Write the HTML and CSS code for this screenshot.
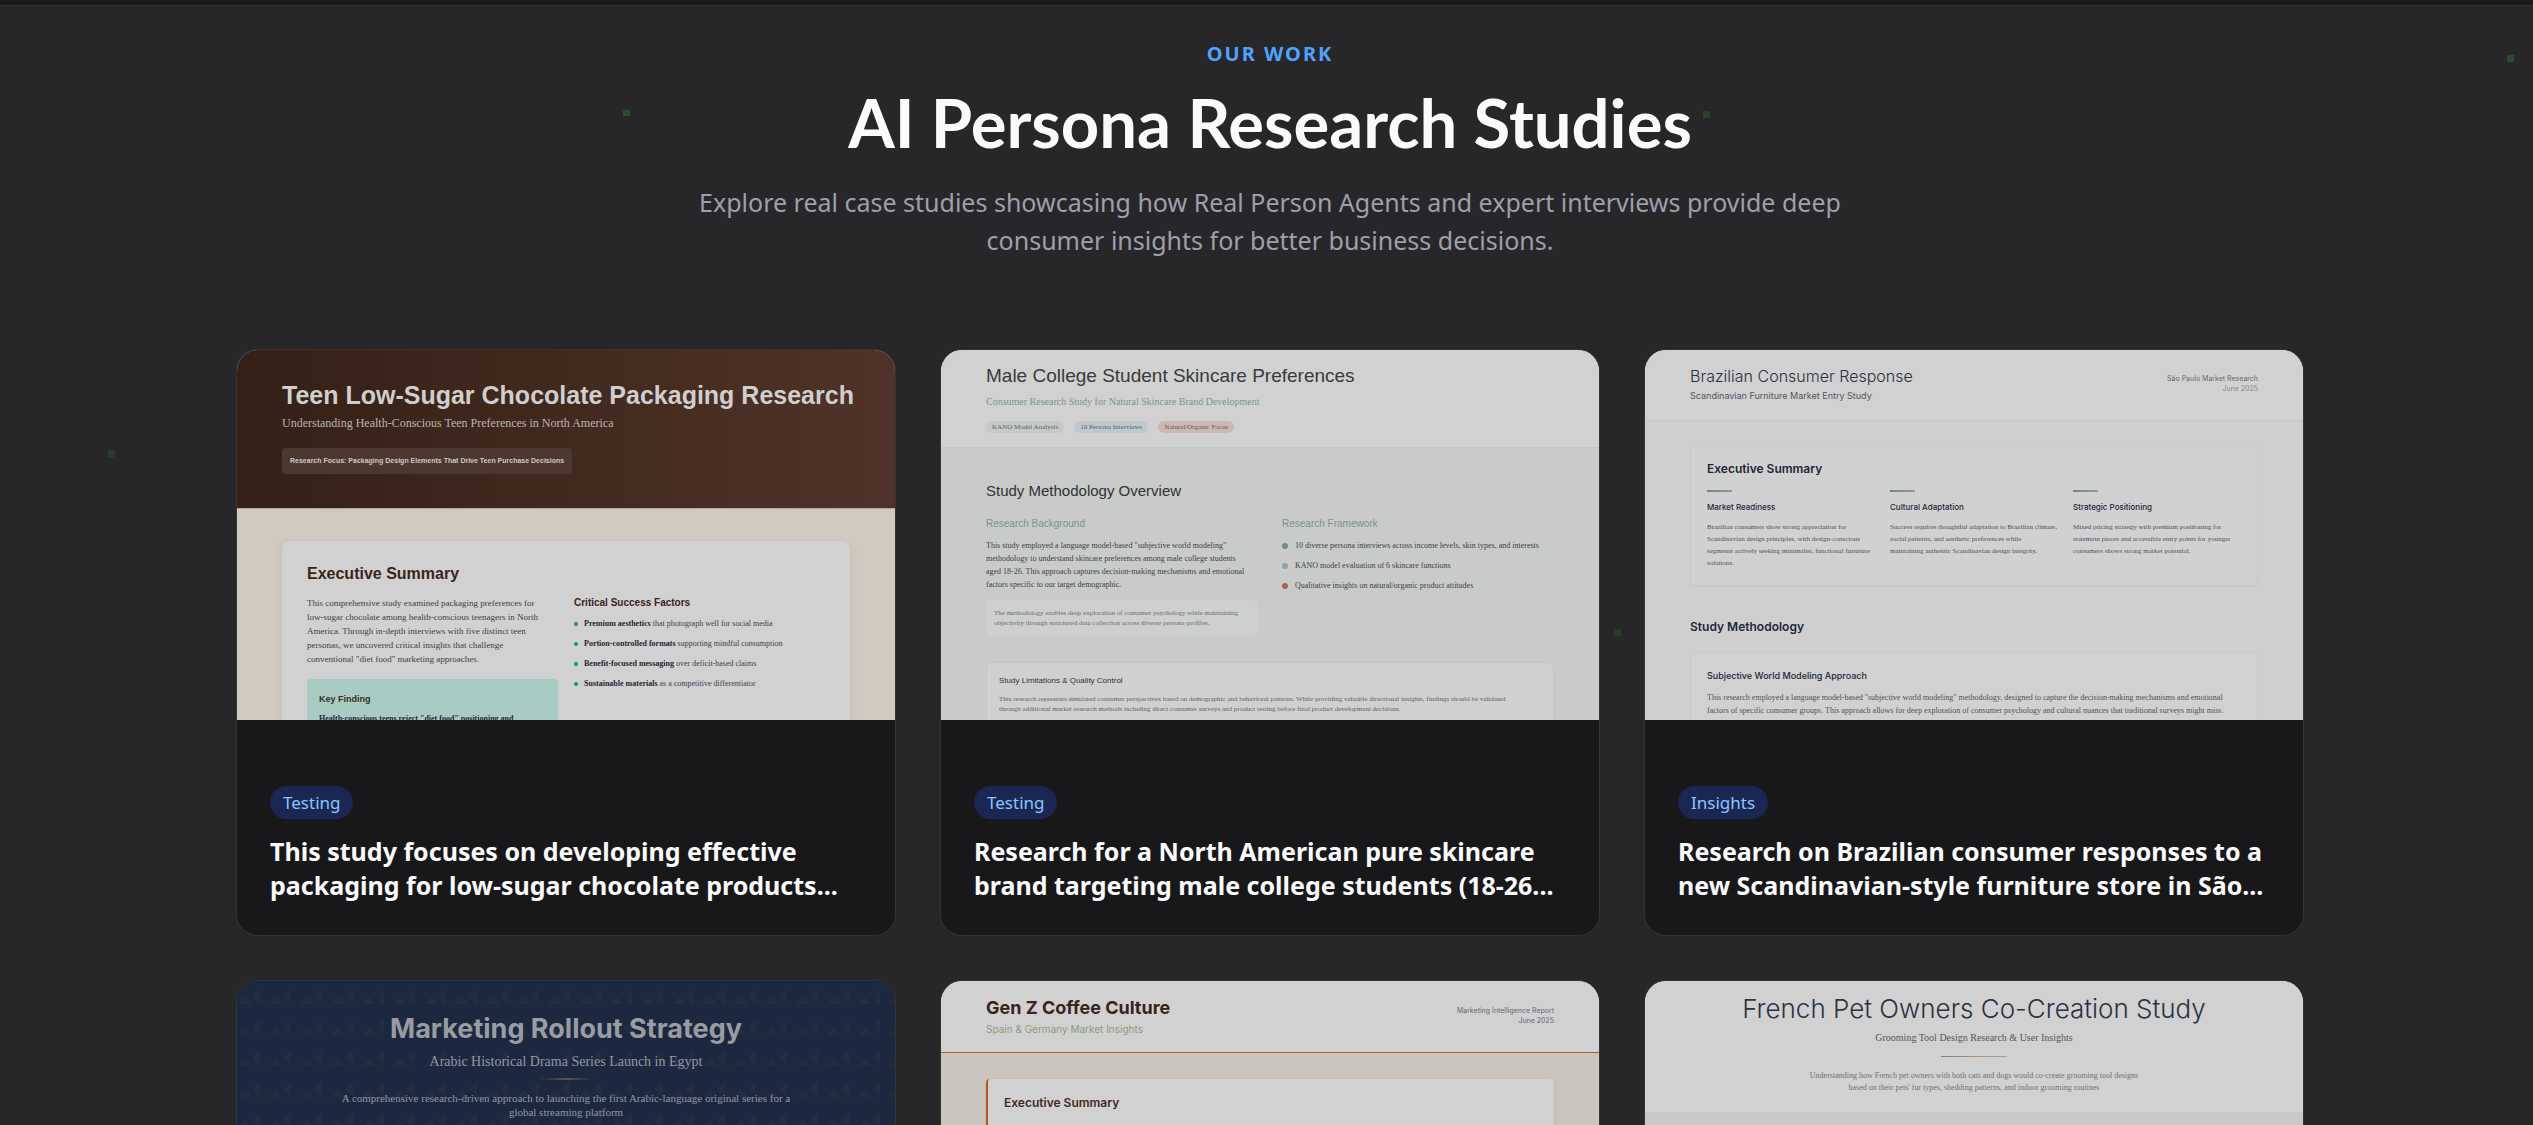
FILE: index.html
```html
<!DOCTYPE html>
<html lang="en">
<head>
<meta charset="utf-8">
<title>AI Persona Research Studies</title>
<link rel="stylesheet" href="styles.css">
</head>
<body>
<div class="page">
  <div class="topbar"></div>
  <i class="spark s1"></i><i class="spark s2"></i><i class="spark s3"></i><i class="spark s4 dim"></i><i class="spark s5 dim"></i>
  <main class="section">
    <header class="intro">
      <p class="eyebrow">OUR WORK</p>
      <h1>AI Persona Research Studies</h1>
      <p class="lead">Explore real case studies showcasing how Real Person Agents and expert interviews provide deep<br>consumer insights for better business decisions.</p>
    </header>

    <div class="grid">
      <article class="card">
        <div class="preview choc">
          <div class="choc-head">
            <h2>Teen Low-Sugar Chocolate Packaging Research</h2>
            <p>Understanding Health-Conscious Teen Preferences in North America</p>
            <span class="focus">Research Focus: Packaging Design Elements That Drive Teen Purchase Decisions</span>
          </div>
          <div class="choc-panel">
            <h3>Executive Summary</h3>
            <div class="choc-cols">
              <div>
                <p class="choc-text">This comprehensive study examined packaging preferences for<br>low-sugar chocolate among health-conscious teenagers in North<br>America. Through in-depth interviews with five distinct teen<br>personas, we uncovered critical insights that challenge<br>conventional "diet food" marketing approaches.</p>
                <div class="finding">
                  <h4>Key Finding</h4>
                  <p>Health-conscious teens reject "diet food" positioning and</p>
                </div>
              </div>
              <div>
                <h4 class="choc-sub">Critical Success Factors</h4>
                <ul class="choc-list">
                  <li><span><b>Premium aesthetics</b> that photograph well for social media</span></li>
                  <li><span><b>Portion-controlled formats</b> supporting mindful consumption</span></li>
                  <li><span><b>Benefit-focused messaging</b> over deficit-based claims</span></li>
                  <li><span><b>Sustainable materials</b> as a competitive differentiator</span></li>
                </ul>
              </div>
            </div>
          </div>
        </div>
        <div class="info">
          <span class="tag">Testing</span>
          <h2 class="title">This study focuses on developing effective<br>packaging for low-sugar chocolate products...</h2>
        </div>
      </article>

      <article class="card">
        <div class="preview skin">
          <div class="skin-head">
            <h2>Male College Student Skincare Preferences</h2>
            <p>Consumer Research Study for Natural Skincare Brand Development</p>
            <div class="chips"><span class="c1">KANO Model Analysis</span><span class="c2">10 Persona Interviews</span><span class="c3">Natural/Organic Focus</span></div>
          </div>
          <div class="skin-body">
            <h3>Study Methodology Overview</h3>
            <div class="skin-cols">
              <div>
                <h4>Research Background</h4>
                <p class="skin-text">This study employed a language model-based "subjective world modeling"<br>methodology to understand skincare preferences among male college students<br>aged 18-26. This approach captures decision-making mechanisms and emotional<br>factors specific to our target demographic.</p>
                <p class="note">The methodology enables deep exploration of consumer psychology while maintaining<br>objectivity through structured data collection across diverse persona profiles.</p>
              </div>
              <div>
                <h4>Research Framework</h4>
                <ul class="skin-list">
                  <li class="green">10 diverse persona interviews across income levels, skin types, and interests</li>
                  <li class="blue">KANO model evaluation of 6 skincare functions</li>
                  <li class="red">Qualitative insights on natural/organic product attitudes</li>
                </ul>
              </div>
            </div>
            <div class="limits">
              <h5>Study Limitations &amp; Quality Control</h5>
              <p>This research represents simulated consumer perspectives based on demographic and behavioral patterns. While providing valuable directional insights, findings should be validated<br>through additional market research methods including direct consumer surveys and product testing before final product development decisions.</p>
            </div>
          </div>
        </div>
        <div class="info">
          <span class="tag">Testing</span>
          <h2 class="title">Research for a North American pure skincare<br>brand targeting male college students (18-26...</h2>
        </div>
      </article>

      <article class="card">
        <div class="preview brazil">
          <div class="brazil-head">
            <div>
              <h2>Brazilian Consumer Response</h2>
              <p>Scandinavian Furniture Market Entry Study</p>
            </div>
            <p class="meta">São Paulo Market Research<br><span>June 2025</span></p>
          </div>
          <div class="brazil-body">
            <div class="panel dotted">
              <h3>Executive Summary</h3>
              <div class="three">
                <div><i class="bar"></i><h4>Market Readiness</h4><p>Brazilian consumers show strong appreciation for<br>Scandinavian design principles, with design-conscious<br>segments actively seeking minimalist, functional furniture<br>solutions.</p></div>
                <div><i class="bar"></i><h4>Cultural Adaptation</h4><p>Success requires thoughtful adaptation to Brazilian climate,<br>social patterns, and aesthetic preferences while<br>maintaining authentic Scandinavian design integrity.</p></div>
                <div><i class="bar"></i><h4>Strategic Positioning</h4><p>Mixed pricing strategy with premium positioning for<br>statement pieces and accessible entry points for younger<br>consumers shows strong market potential.</p></div>
              </div>
            </div>
            <h3 class="method">Study Methodology</h3>
            <div class="panel approach">
              <h4>Subjective World Modeling Approach</h4>
              <p>This research employed a language model-based "subjective world modeling" methodology, designed to capture the decision-making mechanisms and emotional<br>factors of specific consumer groups. This approach allows for deep exploration of consumer psychology and cultural nuances that traditional surveys might miss.</p>
            </div>
          </div>
        </div>
        <div class="info">
          <span class="tag">Insights</span>
          <h2 class="title">Research on Brazilian consumer responses to a<br>new Scandinavian-style furniture store in São...</h2>
        </div>
      </article>

      <article class="card">
        <div class="preview drama">
          <svg class="pattern" width="100%" height="100%" aria-hidden="true">
            <defs><pattern id="tri" width="31" height="31" patternUnits="userSpaceOnUse"><path d="M1 23L8 16L15 23ZM23 8V23L15 15.500Z" fill="#222d3f"/></pattern></defs>
            <rect width="100%" height="100%" fill="url(#tri)"/>
          </svg>
          <div class="drama-copy">
            <h2>Marketing Rollout Strategy</h2>
            <p class="drama-sub">Arabic Historical Drama Series Launch in Egypt</p>
            <i class="rule"></i>
            <p class="drama-text">A comprehensive research-driven approach to launching the first Arabic-language original series for a<br>global streaming platform</p>
          </div>
        </div>
      </article>

      <article class="card">
        <div class="preview coffee">
          <div class="coffee-head">
            <div>
              <h2>Gen Z Coffee Culture</h2>
              <p>Spain &amp; Germany Market Insights</p>
            </div>
            <p class="meta">Marketing Intelligence Report<br>June 2025</p>
          </div>
          <div class="coffee-panel"><h3>Executive Summary</h3></div>
        </div>
      </article>

      <article class="card">
        <div class="preview pets">
          <div class="pets-head">
            <h2>French Pet Owners Co-Creation Study</h2>
            <p class="pets-sub">Grooming Tool Design Research &amp; User Insights</p>
            <i class="rule"></i>
            <p class="pets-text">Understanding how French pet owners with both cats and dogs would co-create grooming tool designs<br>based on their pets' fur types, shedding patterns, and indoor grooming routines</p>
          </div>
        </div>
      </article>
    </div>
  </main>
</div>
</body>
</html>
```
FILE: styles.css
```css
* { box-sizing: border-box; margin: 0; padding: 0; }
body { background: #27272a; font-family: "Noto Sans", sans-serif; }
ul { list-style: none; }
i { display: block; }

.page { position: relative; height: 100vh; overflow: hidden; }
.topbar { height: 6px; background: #1a1a1c; border-bottom: 1px solid #343437; }
.section { padding: 34px 0 0 7px; }

/* drifting background squares */
.spark { position: absolute; width: 7px; height: 6px; background: #265029; }
.spark.dim { background: #263d2a; height: 7px; }
.s1 { left: 623px; top: 110px; }
.s2 { left: 2507px; top: 55px; height: 7px; }
.s3 { left: 1703px; top: 111px; height: 7px; background: #26432a; }
.s4 { left: 108px; top: 450px; }
.s5 { left: 1614px; top: 629px; }

.intro { text-align: center; }
.eyebrow { font-size: 20px; line-height: 28px; font-weight: 700; letter-spacing: 2px; color: #51a2ff; }
.intro h1 { margin-top: 18px; font: 700 67px/72px Lato, sans-serif; color: #fafafa; }
.lead { margin-top: 25px; font-size: 25px; line-height: 38px; color: #9f9fa9; }

.grid { display: grid; grid-template-columns: repeat(3, minmax(0, 1fr)); gap: 44px; width: 100%; max-width: 2068px; margin: 90px auto 0; }
.card { border: 1px solid #343437; border-radius: 22px; overflow: hidden; background: #18181b; }
.preview { height: 370px; overflow: hidden; white-space: nowrap; position: relative; }
.info { padding: 66px 33px 33px; display: flex; flex-direction: column; align-items: flex-start; gap: 15px; }
.tag { padding: 0 13px; border-radius: 17px; background: #1a2753; color: #8ec5ff; font-size: 17px; line-height: 33px; }
.title { font-size: 25px; line-height: 34px; font-weight: 700; color: #fafafa; white-space: nowrap; }

/* chocolate report */
.choc { background: #d0cac0; font-family: "Liberation Serif", serif; }
.choc-head { height: 159px; padding: 31px 45px 0; background: linear-gradient(90deg, #342017, #3f271c 40%, #4f3328); border-bottom: 1px solid #b9a195; }
.choc-head h2 { font: 700 25px/28px "Liberation Sans", sans-serif; color: #d0cfce; }
.choc-head p { margin-top: 6px; font-size: 12px; line-height: 16px; color: #bdb5b0; }
.focus { display: inline-block; margin-top: 17px; padding: 0 8px; border-radius: 4px; background: #4c382e; font: 700 7px/26px "Liberation Sans", sans-serif; color: #ccc8c5; }
.choc-panel { margin: 32px 45px 0; padding: 23px 25px; height: 240px; border-radius: 8px; background: #d1d1d1; box-shadow: 0 2px 8px rgba(60, 40, 20, .08); }
.choc-panel h3 { font: 700 16px/20px "Liberation Sans", sans-serif; color: #3a241a; }
.choc-cols { display: grid; grid-template-columns: 251px 1fr; gap: 16px; margin-top: 12px; }
.choc-text { font-size: 9px; line-height: 14px; color: #38414c; }
.finding { margin-top: 13px; padding: 14px 12px; height: 80px; border-radius: 4px; background: #a8cbc4; }
.finding h4 { font: 700 9px/12px "Liberation Sans", sans-serif; color: #3a2e26; }
.finding p { margin-top: 8px; font-size: 8px; line-height: 12px; font-weight: 700; color: #1f2937; }
.choc-sub { font: 700 10px/14px "Liberation Sans", sans-serif; color: #3a241a; }
.choc-list { display: grid; gap: 8px; margin-top: 8px; font-size: 8px; line-height: 12px; color: #38414c; }
.choc-list li { display: flex; align-items: center; gap: 6px; }
.choc-list li::before { content: ""; width: 4px; height: 4px; border-radius: 50%; background: #109080; }
.choc-list b { color: #1d2733; }

/* skincare report */
.skin { background: #c9cbca; font-family: "Liberation Serif", serif; }
.skin-head { padding: 14px 45px; background: #d1d1d1; border-bottom: 1px solid #c3c7c5; }
.skin-head h2 { font: 400 19px/24px "Liberation Sans", sans-serif; color: #383a3c; }
.skin-head p { margin-top: 7px; font-size: 10px; line-height: 14px; color: #7b9583; }
.chips { display: flex; gap: 10px; margin-top: 12px; font-size: 7px; line-height: 12px; color: #5c6361; }
.chips span { padding: 0 6px; border-radius: 6px; }
.c1 { background: #c5cac7; }
.c2 { background: #bfc8cd; }
.c3 { background: #cdb8b3; }
.skin-body { padding: 33px 45px 0; }
.skin-body h3 { font: 400 15px/20px "Liberation Sans", sans-serif; color: #303234; }
.skin-cols { display: grid; grid-template-columns: 272px 1fr; gap: 24px; margin-top: 16px; }
.skin-cols h4 { font: 400 10px/14px "Liberation Sans", sans-serif; color: #7b9583; }
.skin-text { margin-top: 8px; font-size: 8px; line-height: 13px; color: #3c3f41; }
.note { margin-top: 9px; padding: 8px; border-radius: 6px; background: #cecfcf; font-size: 7px; line-height: 10px; color: #6a6d6e; }
.skin-list { display: grid; gap: 7px; margin-top: 8px; font-size: 8px; line-height: 13px; color: #3c3f41; }
.skin-list li { display: flex; align-items: center; gap: 7px; }
.skin-list li::before { content: ""; width: 6px; height: 6px; border-radius: 50%; background: #6d8f79; }
.skin-list .blue::before { background: #8ba2b5; }
.skin-list .red::before { background: #a8644d; }
.limits { margin-top: 26px; padding: 12px; height: 100px; border: 1px solid #c3c7c5; border-radius: 4px; background: #d0d0d0; }
.limits h5 { font: 400 8px/12px "Liberation Sans", sans-serif; color: #303234; }
.limits p { margin-top: 7px; font-size: 7px; line-height: 10px; color: #5f6264; }

/* furniture report */
.brazil { background: #cfcfcf; font-family: "Liberation Serif", serif; }
.brazil-head, .coffee-head { display: flex; justify-content: space-between; align-items: center; padding: 16px 45px 18px; background: #d1d1d1; border-bottom: 1px solid #c6c7c8; }
.brazil-head h2 { font: 300 16px/20px Inter, sans-serif; color: #2a2f3e; }
.brazil-head p { margin-top: 4px; font: 400 9px/12px Inter, sans-serif; color: #4f5663; }
.brazil-head .meta, .coffee-head .meta { margin: 0; text-align: right; font: 400 7px/10px Inter, sans-serif; color: #626874; }
.meta span { color: #858a93; }
.brazil-body { padding: 25px 45px 0; }
.panel { padding: 14px 16px 16px; border: 1px solid #c9caca; border-radius: 4px; background: #d1d1d1; box-shadow: 0 1px 2px rgba(0, 0, 0, .04); }
.dotted { background: radial-gradient(circle at 1px 1px, #cdcdcd 1px, transparent 1px) 0 0 / 10px 10px #d1d1d1; }
.brazil-body h3 { font: 600 12px/16px Inter, sans-serif; color: #202637; }
.three { display: grid; grid-template-columns: 167px 167px 1fr; gap: 16px; margin-top: 13px; }
.bar { width: 25px; height: 2px; background: linear-gradient(90deg, #71858f, #8aa08c); }
.brazil-body h4 { margin-top: 9px; font: 500 8px/12px Inter, sans-serif; color: #202637; }
.brazil-body p { margin-top: 8px; font-size: 7px; line-height: 12px; color: #4a5160; }
.brazil-body .method { margin: 33px 0 17px; }
.approach { height: 120px; }
.brazil-body .approach h4 { margin-top: 3px; font-size: 9px; }
.brazil-body .approach p { margin-top: 9px; font-size: 8px; line-height: 13px; }

/* drama launch report */
.drama { background: #1b2840; text-align: center; font-family: "Liberation Serif", serif; }
.pattern { position: absolute; inset: 0; }
.drama-copy { position: relative; padding-top: 33px; color: #9399a1; }
.drama h2 { font: 700 27px/30px Inter, sans-serif; color: #999ca2; }
.drama-sub { margin-top: 8px; font-size: 14px; line-height: 20px; }
.rule { height: 2px; margin: 6px auto 0; width: 56px; background: linear-gradient(90deg, transparent, #5b5441, transparent); }
.drama-text { margin-top: 11px; font-size: 11px; line-height: 14px; }

/* coffee report */
.coffee { background: #cac6bd; font-family: Inter, sans-serif; }
.coffee-head { padding-bottom: 17px; border-bottom-color: #b0622f; }
.coffee-head h2 { font-size: 18px; line-height: 22px; font-weight: 700; color: #38241a; }
.coffee-head p { margin-top: 4px; font-size: 10px; line-height: 12px; color: #8a9d80; }
.coffee-panel { margin: 26px 45px 0; padding: 16px; height: 280px; border-left: 2px solid #b05a20; border-radius: 4px; background: #d1d1d1; box-shadow: 0 1px 4px rgba(60, 40, 20, .1); }
.coffee-panel h3 { font-size: 12px; line-height: 16px; font-weight: 600; color: #40291f; }

/* pets report */
.pets { background: #c8c9cb; text-align: center; font-family: "Liberation Serif", serif; }
.pets-head { padding: 13px 0 18px; background: #d1d1d1; border-bottom: 1px solid #c8c4c0; }
.pets h2 { font: 300 26px/30px Inter, sans-serif; color: #2b333f; }
.pets-sub { margin-top: 7px; font-size: 10px; line-height: 14px; color: #4f5762; }
.pets .rule { height: 1px; margin-top: 11px; width: 66px; background: linear-gradient(90deg, #707f98, #b58f72, #86afae); }
.pets-text { margin-top: 13px; font-size: 8px; line-height: 12px; color: #6a717a; }
```
